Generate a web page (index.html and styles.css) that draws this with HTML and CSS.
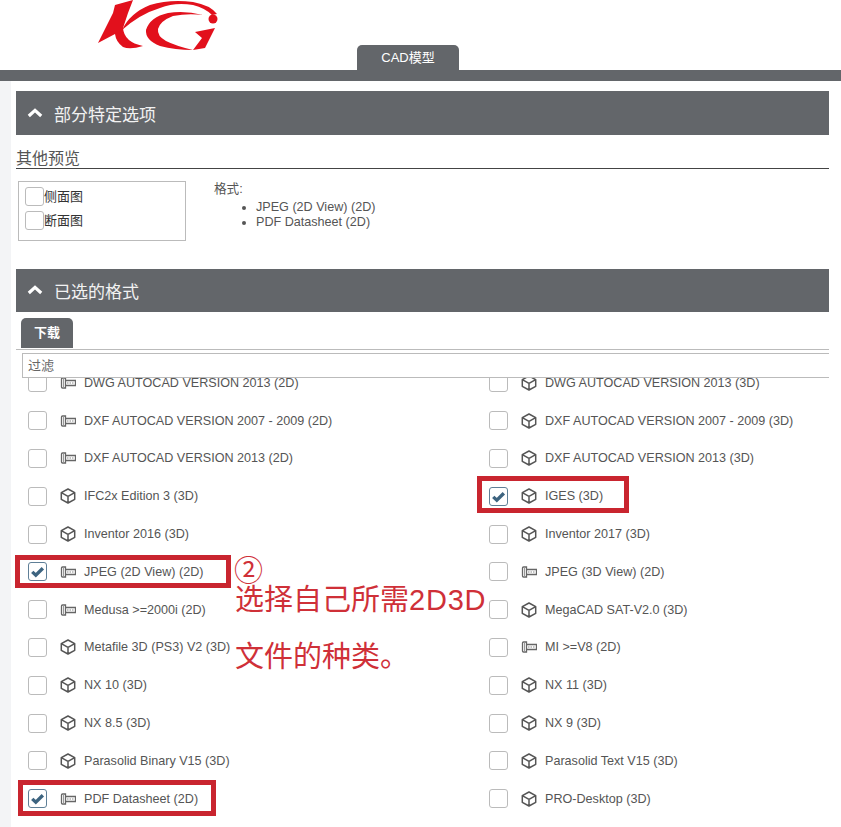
FILE: index.html
```html
<!DOCTYPE html>
<html lang="zh">
<head>
<meta charset="utf-8">
<title>CAD模型</title>
<link rel="stylesheet" href="styles.css">
</head>
<body>
<svg class="defs" width="0" height="0" aria-hidden="true">
  <symbol id="cube" viewBox="0 0 16 16"><path d="M8 1 L14.7 4.7 V11.3 L8 15 L1.3 11.3 V4.7 Z M1.3 4.7 L8 8.4 L14.7 4.7 M8 8.4 V15" fill="none" stroke="#555" stroke-width="1.5" stroke-linejoin="round"/></symbol>
  <symbol id="part" viewBox="0 0 16 16"><path d="M2.5 3 H5.5 V13 H2.5 Q1.5 13 1.5 12 V4 Q1.5 3 2.500 3 Z M5.5 5.5 H15.5 V10.5 H5.5" fill="none" stroke="#666" stroke-width="1.3"/><path d="M7 8 H14" stroke="#888" stroke-width="1.2" stroke-dasharray="1.5 1"/><path d="M3.5 3.5 V12.5" stroke="#999" stroke-width="1"/></symbol>
  <symbol id="check" viewBox="0 0 16 16"><path d="M2.4 8.4 L6.2 12 L13.7 4.6" fill="none" stroke="#3d6480" stroke-width="3.6"/></symbol>
  <symbol id="chev" viewBox="0 0 16 10"><path d="M1.8 8 L8 2.4 L14.2 8" fill="none" stroke="#fff" stroke-width="3.2"/></symbol>
</svg>

<header class="top">
  <svg class="logo" viewBox="90 0 135 52" width="135" height="52" role="img" aria-label="KCi">
    <g fill="#e2101c">
      <path d="M98 43 L113 13 L115 5 L133 0 L128 13 L123 28 Q124 42 143 46 Q130 50 123 47 Q116 42 115 34 Z"/>
      <path d="M122 30 Q130 13 150 5 Q170 -1 193 2 Q210 5 217 14 L212 15 Q205 8 193 5 Q175 2 160 8 Q140 14 122 30 Z"/>
      <circle cx="213" cy="19" r="4.5"/>
      <path d="M203 15 Q184 10 168 13 Q150 17 146 30 Q145 40 160 46 Q175 50 193 50 Q176 46 166 41 Q157 36 158 29 Q160 21 173 16 Q188 13 203 15 Z"/>
      <path d="M195 32 L215 28 L205 48 L193 50 L202 38 Z"/>
    </g>
  </svg>
  <div class="top-tab">CAD模型</div>
</header>
<div class="bar"></div>

<div class="page">
  <div class="strip"></div>
  <main class="content">
    <section class="panel-head head-first">
      <svg class="chev"><use href="#chev"/></svg><h2>部分特定选项</h2>
    </section>
    <h3 class="sub">其他预览</h3>
    <div class="options">
      <div class="preview-box">
        <label class="pv"><span class="box"></span>侧面图</label>
        <label class="pv"><span class="box"></span>断面图</label>
      </div>
      <div class="formats">
        <div>格式:</div>
        <ul>
          <li>JPEG (2D View) (2D)</li>
          <li>PDF Datasheet (2D)</li>
        </ul>
      </div>
    </div>

    <section class="panel-head">
      <svg class="chev"><use href="#chev"/></svg><h2>已选的格式</h2>
    </section>
    <div class="tabs"><div class="tab">下载</div></div>
    <div class="filter">过滤</div>

    <div class="list">
      <div class="grid">
        <div class="row"><span class="box"></span><svg class="ic"><use href="#part"/></svg>DWG AUTOCAD VERSION 2013 (2D)</div>
        <div class="row"><span class="box"></span><svg class="ic"><use href="#cube"/></svg>DWG AUTOCAD VERSION 2013 (3D)</div>
        <div class="row"><span class="box"></span><svg class="ic"><use href="#part"/></svg>DXF AUTOCAD VERSION 2007 - 2009 (2D)</div>
        <div class="row"><span class="box"></span><svg class="ic"><use href="#cube"/></svg>DXF AUTOCAD VERSION 2007 - 2009 (3D)</div>
        <div class="row"><span class="box"></span><svg class="ic"><use href="#part"/></svg>DXF AUTOCAD VERSION 2013 (2D)</div>
        <div class="row"><span class="box"></span><svg class="ic"><use href="#cube"/></svg>DXF AUTOCAD VERSION 2013 (3D)</div>
        <div class="row"><span class="box"></span><svg class="ic"><use href="#cube"/></svg>IFC2x Edition 3 (3D)</div>
        <div class="row"><span class="box on"><svg class="tick"><use href="#check"/></svg></span><svg class="ic"><use href="#cube"/></svg>IGES (3D)</div>
        <div class="row"><span class="box"></span><svg class="ic"><use href="#cube"/></svg>Inventor 2016 (3D)</div>
        <div class="row"><span class="box"></span><svg class="ic"><use href="#cube"/></svg>Inventor 2017 (3D)</div>
        <div class="row"><span class="box on"><svg class="tick"><use href="#check"/></svg></span><svg class="ic"><use href="#part"/></svg>JPEG (2D View) (2D)</div>
        <div class="row"><span class="box"></span><svg class="ic"><use href="#part"/></svg>JPEG (3D View) (2D)</div>
        <div class="row"><span class="box"></span><svg class="ic"><use href="#part"/></svg>Medusa &gt;=2000i (2D)</div>
        <div class="row"><span class="box"></span><svg class="ic"><use href="#cube"/></svg>MegaCAD SAT-V2.0 (3D)</div>
        <div class="row"><span class="box"></span><svg class="ic"><use href="#cube"/></svg>Metafile 3D (PS3) V2 (3D)</div>
        <div class="row"><span class="box"></span><svg class="ic"><use href="#part"/></svg>MI &gt;=V8 (2D)</div>
        <div class="row"><span class="box"></span><svg class="ic"><use href="#cube"/></svg>NX 10 (3D)</div>
        <div class="row"><span class="box"></span><svg class="ic"><use href="#cube"/></svg>NX 11 (3D)</div>
        <div class="row"><span class="box"></span><svg class="ic"><use href="#cube"/></svg>NX 8.5 (3D)</div>
        <div class="row"><span class="box"></span><svg class="ic"><use href="#cube"/></svg>NX 9 (3D)</div>
        <div class="row"><span class="box"></span><svg class="ic"><use href="#cube"/></svg>Parasolid Binary V15 (3D)</div>
        <div class="row"><span class="box"></span><svg class="ic"><use href="#cube"/></svg>Parasolid Text V15 (3D)</div>
        <div class="row"><span class="box on"><svg class="tick"><use href="#check"/></svg></span><svg class="ic"><use href="#part"/></svg>PDF Datasheet (2D)</div>
        <div class="row"><span class="box"></span><svg class="ic"><use href="#cube"/></svg>PRO-Desktop (3D)</div>
      </div>
    </div>
  </main>
</div>

<div class="mark mark-iges"></div>
<div class="mark mark-jpeg"></div>
<div class="mark mark-pdf"></div>
<div class="note note-num">②</div>
<div class="note note-a">选择自己所需<span class="latin">2D3D</span></div>
<div class="note note-b">文件的种类。</div>
</body>
</html>
```

FILE: styles.css
```css
* { box-sizing: border-box; }
html, body { margin: 0; height: 827px; overflow: hidden; background: #fff; }
body {
  position: relative;
  font-family: "Liberation Sans", "Noto Sans CJK SC", sans-serif;
  color: #555;
}
.defs { position: absolute; }

.top { height: 70px; display: flex; align-items: flex-start; }
.logo { margin-left: 90px; flex: none; }
.top-tab {
  margin: 45px 0 0 132px;
  width: 102px;
  height: 25px;
  background: #63666a;
  border-radius: 5px 5px 0 0;
  color: #fff;
  font-size: 13px;
  line-height: 25px;
  text-align: center;
}
.bar { height: 11px; background: #63666a; }

.page { display: flex; height: 746px; }
.strip { width: 11px; background: #f3f4f6; flex: none; }
.content { flex: 1; min-width: 0; padding: 10px 12px 0 5px; overflow: hidden; }

.panel-head {
  height: 43px;
  background: #63666a;
  display: flex;
  align-items: center;
  padding: 0 0 1px 11px;
  color: #fff;
}
.head-first { height: 44px; padding-bottom: 0; }
.panel-head h2 { margin: 0; font-size: 17px; font-weight: 400; color: #f2f2f2; }
.chev { width: 16px; height: 10px; margin-right: 11px; flex: none; }

.sub {
  margin: 0;
  height: 34px;
  padding-top: 14px;
  font-size: 16px;
  line-height: 20px;
  font-weight: 400;
  border-bottom: 1px solid #444;
}

.options { display: flex; margin: 12px 0 28px 2px; height: 60px; }
.preview-box {
  width: 168px;
  border: 1px solid #bbb;
  padding: 5px 0 0 6px;
  display: flex;
  flex-direction: column;
  gap: 5px;
}
.pv { display: flex; align-items: center; font-size: 13px; line-height: 19px; color: #333; }
.box {
  width: 19px;
  height: 19px;
  flex: none;
  border: 1px solid #bbb;
  border-radius: 3px;
  background: #fff;
  display: flex;
  align-items: center;
  justify-content: center;
}
.box.on { border-color: #5f7f97; }
.tick { width: 15px; height: 15px; }

.formats { margin-left: 28px; padding-top: 1px; font-size: 12.6px; line-height: 15px; color: #555; }
.formats ul { margin: 3px 0 0; padding-left: 42px; }

.tabs { padding: 6px 0 0 5px; height: 38px; border-bottom: 1px solid #bbb; }
.tab {
  width: 52px;
  height: 30px;
  background: #63666a;
  border-radius: 5px 5px 0 0;
  color: #fff;
  font-size: 13px;
  font-weight: 700;
  line-height: 30px;
  text-align: center;
}
.filter {
  margin: 3px 0 0 6px;
  height: 25px;
  border: 1px solid #bbb;
  border-right: 0;
  padding-left: 5px;
  font-size: 13px;
  line-height: 24px;
  color: #666;
}

.list { height: 449px; overflow: hidden; }
.grid { display: grid; grid-template-columns: 461px 340px; grid-auto-rows: 37.8px; margin: -14px 0 0 6px; }
.row {
  display: flex;
  align-items: center;
  padding-left: 6px;
  font-size: 12.6px;
  white-space: nowrap;
  color: #555;
}
.ic { width: 16px; height: 16px; margin: 0 8px 0 13px; flex: none; }

.mark { position: absolute; border: 5px solid #c9252f; }
.mark-iges { left: 477px; top: 476px; width: 152px; height: 37px; }
.mark-jpeg { left: 15px; top: 555px; width: 216px; height: 33px; }
.mark-pdf { left: 18px; top: 780px; width: 198px; height: 36px; }

.note {
  position: absolute;
  color: #cf3038;
  font-family: "Noto Sans CJK SC", sans-serif;
  font-size: 29px;
  line-height: 40px;
  white-space: nowrap;
}
.latin { font-family: "Liberation Sans", sans-serif; letter-spacing: 0.8px; }
.note-num { left: 234px; top: 548px; }
.note-a { left: 235px; top: 577px; }
.note-b { left: 235px; top: 634px; }
```
